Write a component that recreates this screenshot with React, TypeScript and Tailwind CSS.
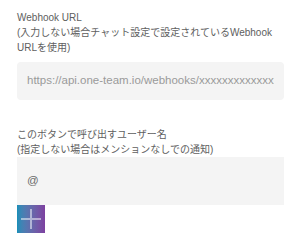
export default function App() {
  return (
    <div
      className="w-[305px] h-[250px] bg-white overflow-hidden"
      style={{ fontFamily: '"Liberation Sans", "Noto Sans CJK JP", sans-serif' }}
    >
      <div className="ml-[17px] w-[267px] pt-[10px]">
        {/* Webhook URL */}
        <label className="block text-[10px] leading-[15px] text-[#5e5e5e]">
          Webhook URL
          <br />
          (入力しない場合チャット設定で設定されているWebhook URLを使用)
        </label>
        <div className="mt-[7px] h-[38px] rounded-[4px] bg-[#f4f4f4] flex items-center px-[10px] overflow-hidden">
          <span className="text-[11.5px] text-[#9a9a9a] whitespace-nowrap overflow-hidden">
            https://api.one-team.io/webhooks/xxxxxxxxxxxxxxxxxxxx
          </span>
        </div>

        {/* Mention user */}
        <label className="block mt-[27px] text-[10px] leading-[15px] text-[#5e5e5e]">
          このボタンで呼び出すユーザー名
          <br />
          (指定しない場合はメンションなしでの通知)
        </label>
        <div className="h-[48px] bg-[#f4f4f4] flex items-center px-[10px]">
          <span className="text-[11.5px] text-[#6a6a6a]">@</span>
        </div>

        <button className="w-[28px] h-[28px] flex items-center justify-center bg-gradient-to-r from-[#148fb8] to-[#7d40a0]">
          <svg width="20" height="20" viewBox="0 0 20 20">
            <path d="M10 0v20M0 10h20" stroke="white" strokeOpacity="0.5" strokeWidth="2" fill="none" />
          </svg>
        </button>
      </div>
    </div>
  );
}
